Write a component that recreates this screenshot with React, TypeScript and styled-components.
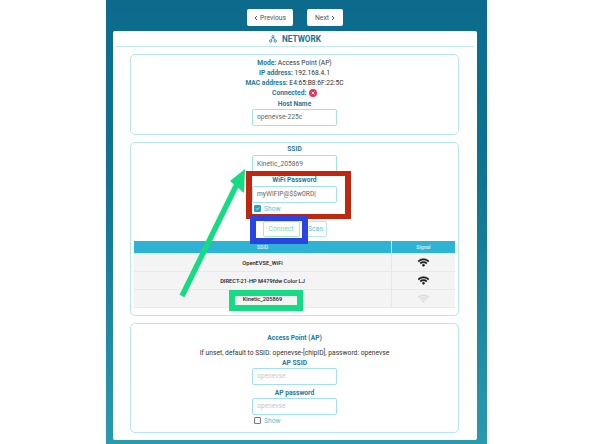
import { FaWifi } from 'react-icons/fa'
import styled, { createGlobalStyle } from 'styled-components'

const GlobalStyle = createGlobalStyle`
    html, body {
        margin: 0;
        padding: 0;
        background: #fff;
    }
    body {
        font-family: Roboto, "Liberation Sans", sans-serif;
        font-size: 6.7px;
        color: #333;
    }
`

const Screen = styled.div`
    position: relative;
    box-sizing: border-box;
    width: 381px;
    height: 444px;
    margin-left: 106px;
    padding: 9px 7px 0;
    overflow: hidden;
    background: linear-gradient(180deg, #0c6b8d 0%, #0f7391 40%, #2a9ab0 100%);
`

const Nav = styled.div`
    display: flex;
    justify-content: center;
    gap: 14px;
    height: 17px;
    margin-bottom: 5px;
    padding-right: 3px;
`

const NavButton = styled.div<{ $width: number }>`
    display: flex;
    align-items: center;
    justify-content: center;
    gap: 2px;
    width: ${({ $width }) => $width}px;
    background: #fff;
    border-radius: 2px;
    color: #555;
    font-size: 6.8px;
`

const Card = styled.div`
    box-sizing: border-box;
    width: 364px;
    height: 409px;
    padding: 0 3px;
    background: #fff;
    border-radius: 2px;
`

const Title = styled.div`
    display: flex;
    align-items: center;
    justify-content: center;
    gap: 5px;
    height: 15px;
    margin-bottom: 7px;
    border-bottom: 1.5px solid #bdeaf3;
    color: #1c7396;
    font-size: 8.2px;
    font-weight: 700;
`

const Panel = styled.div<{ $height: number }>`
    display: flex;
    flex-direction: column;
    align-items: center;
    box-sizing: border-box;
    width: 329px;
    height: ${({ $height }) => $height}px;
    margin: 0 0 7px 14px;
    border: 1px solid #b5e8f2;
    border-radius: 5px;
`

const InfoLine = styled.div`
    height: 10px;
    line-height: 10px;
    white-space: nowrap;
    color: #333;
`

const Key = styled.span`
    color: #237a9c;
    font-weight: 700;
`

const InfoList = styled.div`
    display: flex;
    flex-direction: column;
    align-items: center;
    margin-top: 3px;
`

const Field = styled.div`
    box-sizing: border-box;
    width: 85px;
    height: 17px;
    padding: 0 4px;
    line-height: 15px;
    border: 1px solid #a0e2ef;
    border-radius: 2px;
    color: #666;
    white-space: nowrap;
`

const Placeholder = styled(Field)`
    color: #c8c8c8;
`

const SsidField = styled(Field)`
    height: 18px;
    line-height: 16px;
`

const Label = styled.div`
    height: 10px;
    line-height: 10px;
    color: #237a9c;
    font-weight: 700;
`

const HostLabel = styled(Label)`
    margin-top: 1px;
`

const SsidLabel = styled(Label)`
    margin-top: 0;
    height: 12px;
    padding-top: 1px;
    box-sizing: border-box;
`

const PasswordLabel = styled(Label)`
    margin-top: 2px;
    margin-bottom: 1px;
`

const ShowRow = styled.div`
    display: flex;
    align-items: center;
    gap: 3px;
    width: 81px;
    height: 11px;
    color: #5cc0d8;
`

const Check = styled.span<{ $on?: boolean }>`
    display: flex;
    align-items: center;
    justify-content: center;
    box-sizing: border-box;
    width: 7px;
    height: 7px;
    border-radius: 1px;
    border: 1px solid ${({ $on }) => ($on ? '#2b9fc4' : '#777')};
    background: ${({ $on }) => ($on ? '#2b9fc4' : '#fff')};
`

const Buttons = styled.div`
    display: flex;
    gap: 5px;
    height: 16px;
    margin-top: 7px;
`

const ActionButton = styled.div<{ $color: string; $border: string; $width: number }>`
    display: flex;
    align-items: center;
    justify-content: center;
    box-sizing: border-box;
    width: ${({ $width }) => $width}px;
    border: 1px solid ${({ $border }) => $border};
    border-radius: 2px;
    color: ${({ $color }) => $color};
`

const Table = styled.div`
    width: 321px;
    margin-top: 4px;
`

const Row = styled.div<{ $head?: boolean }>`
    display: grid;
    grid-template-columns: 257px 64px;
    height: ${({ $head }) => ($head ? 13 : 18)}px;
    background: ${({ $head }) => ($head ? '#2fb3d5' : '#f4f4f4')};
    color: ${({ $head }) => ($head ? '#d9f2f8' : '#222')};
    font-size: ${({ $head }) => ($head ? 5.2 : 5.7)}px;
    font-weight: 500;
    border-bottom: 1px solid #e9e9e9;
    box-sizing: border-box;
`

const Cell = styled.div`
    display: flex;
    align-items: center;
    justify-content: center;
    & + & {
        border-left: 1px solid #e6e6e6;
    }
`

const Signal = styled(FaWifi)<{ $weak?: boolean }>`
    width: 11px;
    height: 9px;
    color: ${({ $weak }) => ($weak ? '#dcdcdc' : '#1a1a1a')};
    stroke: currentColor;
    stroke-width: 30;
`

const ApHead = styled(Label)`
    margin-top: 9px;
    margin-bottom: 5px;
`

const ApPasswordLabel = styled(Label)`
    margin-top: 3px;
`

const BoxOverlay = styled.div<{ $color: string; $x: number; $y: number; $w: number; $h: number; $line: string }>`
    position: absolute;
    box-sizing: border-box;
    left: ${({ $x }) => $x - 106}px;
    top: ${({ $y }) => $y}px;
    width: ${({ $w }) => $w}px;
    height: ${({ $h }) => $h}px;
    border-style: solid;
    border-width: ${({ $line }) => $line};
    border-color: ${({ $color }) => $color};
`

const ArrowSvg = styled.svg`
    position: absolute;
    left: 0;
    top: 0;
`

const StatusIcon = styled.svg`
    vertical-align: -1.5px;
    margin-left: 1px;
`

const Chevron = ({ dir }: { dir: 'l' | 'r' }) => (
    <svg width="4" height="6" viewBox="0 0 4 6">
        <path d={dir === 'l' ? 'M3 1 1 3l2 2' : 'M1 1l2 2-2 2'} fill="none" stroke="#555" strokeWidth="1" />
    </svg>
)

const NetworkIcon = () => (
    <svg width="8" height="8" viewBox="0 0 8 8" fill="#1c7396" stroke="#1c7396" strokeWidth="0.8">
        <circle cx="4" cy="1.7" r="1.1" fill="none" />
        <circle cx="1.7" cy="6" r="1.2" fill="none" />
        <circle cx="6.3" cy="6" r="1.2" fill="none" />
        <path d="M3.5 2.8 2.4 4.9M4.5 2.8l1.1 2.1" />
    </svg>
)

const networks = [
    { name: 'OpenEVSE_WiFi' },
    { name: 'DIRECT-21-HP M479fdw Color LJ' },
    { name: 'Kinetic_205869', weak: true }
]

export default function App() {
    return (
        <>
            <GlobalStyle />
            <Screen>
                <Nav>
                    <NavButton $width={46}><Chevron dir="l" /> Previous</NavButton>
                    <NavButton $width={36}>Next <Chevron dir="r" /></NavButton>
                </Nav>
                <Card>
                    <Title><NetworkIcon /> NETWORK</Title>
                    <Panel $height={81}>
                        <InfoList>
                            <InfoLine><Key>Mode:</Key> Access Point (AP)</InfoLine>
                            <InfoLine><Key>IP address:</Key> 192.168.4.1</InfoLine>
                            <InfoLine><Key>MAC address:</Key> E4:65:B8:6F:22:5C</InfoLine>
                            <InfoLine>
                                <Key>Connected:</Key>{' '}
                                <StatusIcon width="8" height="8" viewBox="0 0 8 8">
                                    <circle cx="4" cy="4" r="4" fill="#ef2f5c" />
                                    <path d="M2.7 2.7l2.6 2.6M5.3 2.7 2.7 5.3" stroke="#fff" strokeWidth="1" />
                                </StatusIcon>
                            </InfoLine>
                        </InfoList>
                        <HostLabel>Host Name</HostLabel>
                        <Field>openevse-225c</Field>
                    </Panel>
                    <Panel $height={174}>
                        <SsidLabel>SSID</SsidLabel>
                        <SsidField>Kinetic_205869</SsidField>
                        <PasswordLabel>WiFi Password</PasswordLabel>
                        <Field>myWIFIP@$$w0RD|</Field>
                        <ShowRow>
                            <Check $on>
                                <svg width="5" height="5" viewBox="0 0 5 5">
                                    <path d="M1 2.5l1 1 2-2" fill="none" stroke="#fff" strokeWidth="0.8" />
                                </svg>
                            </Check>
                            Show
                        </ShowRow>
                        <Buttons>
                            <ActionButton $color="#74dfa8" $border="#a8ebc9" $width={37}>Connect</ActionButton>
                            <ActionButton $color="#5cc0d8" $border="#b5e8f2" $width={22}>Scan</ActionButton>
                        </Buttons>
                        <Table>
                            <Row $head><Cell>SSID</Cell><Cell>Signal</Cell></Row>
                            {networks.map((n) => (
                                <Row key={n.name}>
                                    <Cell>{n.name}</Cell>
                                    <Cell><Signal $weak={n.weak} /></Cell>
                                </Row>
                            ))}
                        </Table>
                    </Panel>
                    <Panel $height={110}>
                        <ApHead>Access Point (AP)</ApHead>
                        <InfoLine>If unset, default to SSID: openevse-[chipID], password: openevse</InfoLine>
                        <Label>AP SSID</Label>
                        <Placeholder>openevse</Placeholder>
                        <ApPasswordLabel>AP password</ApPasswordLabel>
                        <Placeholder>openevse</Placeholder>
                        <ShowRow><Check /> Show</ShowRow>
                    </Panel>
                </Card>
                <BoxOverlay $color="#c1270f" $x={246} $y={171} $w={105} $h={48} $line="5.5px 6px" />
                <BoxOverlay $color="#2a44e0" $x={250} $y={215} $w={58} $h={29} $line="6px" />
                <BoxOverlay $color="#15dc82" $x={229} $y={290} $w={74} $h={21} $line="6.5px 6px" />
                <ArrowSvg width="381" height="444" viewBox="106 0 381 444">
                    <path d="M182 296 238 182" stroke="#15dc82" strokeWidth="5.5" fill="none" />
                    <path d="M245 169 230 181 244 193Z" fill="#15dc82" />
                </ArrowSvg>
            </Screen>
        </>
    )
}
